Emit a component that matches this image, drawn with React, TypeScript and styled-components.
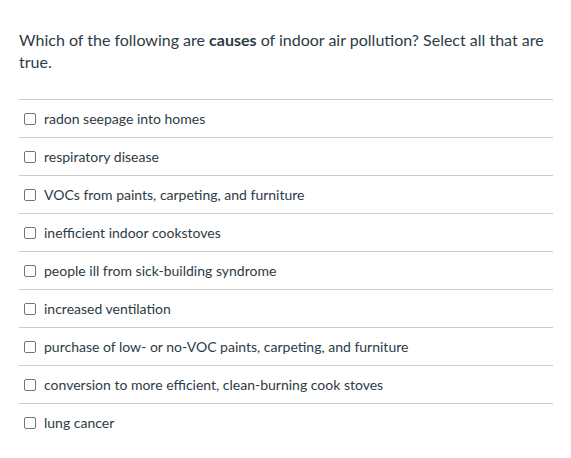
import React from "react";
import styled, { createGlobalStyle } from "styled-components";

const GlobalStyle = createGlobalStyle`
  body {
    margin: 0;
    background: #fff;
    font-family: Lato, "Open Sans", sans-serif;
    color: #2d3b45;
  }
`;

const Page = styled.div`
  padding: 29px 18px 0 19px;
  width: 534px;
`;

const Question = styled.p`
  margin: 0 0 26px;
  font-size: 16px;
  line-height: 22px;

  strong {
    font-weight: 700;
  }
`;

const AnswerList = styled.div`
  display: flex;
  flex-direction: column;
`;

const AnswerRow = styled.label`
  display: flex;
  align-items: center;
  gap: 8px;
  height: 37px;
  border-top: 1px solid #c7cdd1;
  padding-left: 5px;
  font-size: 14px;
  cursor: pointer;
`;

const Box = styled.span`
  box-sizing: border-box;
  width: 12px;
  height: 12px;
  border: 1px solid #6b7780;
  border-radius: 2px;
  background: #fff;
  flex-shrink: 0;
`;

const answers = [
  "radon seepage into homes",
  "respiratory disease",
  "VOCs from paints, carpeting, and furniture",
  "inefficient indoor cookstoves",
  "people ill from sick-building syndrome",
  "increased ventilation",
  "purchase of low- or no-VOC paints, carpeting, and furniture",
  "conversion to more efficient, clean-burning cook stoves",
  "lung cancer",
];

const App = () => {
  return (
    <>
      <GlobalStyle />
      <Page>
        <Question>
          Which of the following are <strong>causes</strong> of indoor air
          pollution? Select all that are true.
        </Question>
        <AnswerList>
          {answers.map((a) => (
            <AnswerRow key={a}>
              <Box />
              {a}
            </AnswerRow>
          ))}
        </AnswerList>
      </Page>
    </>
  );
};

export default App;
